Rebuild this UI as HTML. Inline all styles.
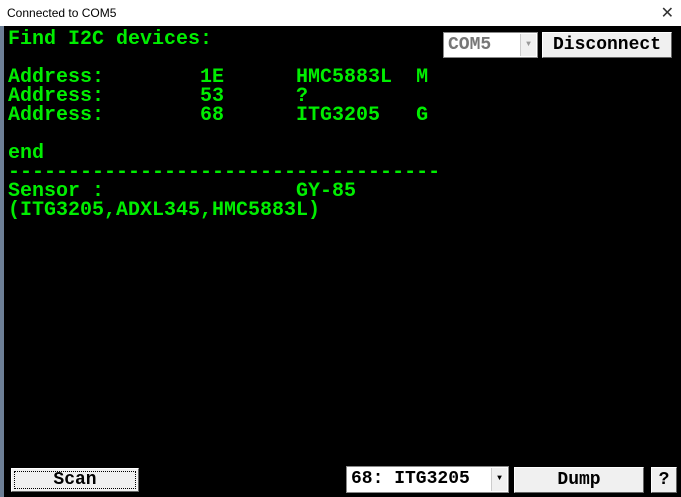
<!DOCTYPE html>
<html><head><style>
body{margin:0;width:681px;height:497px;overflow:hidden;background:#fff;position:relative;font-family:"Liberation Sans",sans-serif}
#title{position:absolute;left:0;top:0;width:681px;height:26px;background:#fff;font-size:12px;color:#000}
#title span{position:absolute;left:7px;top:6px}
#x{position:absolute;right:7px;top:3px;font-size:16px;color:#333;font-weight:300}
#left{position:absolute;left:0;top:26px;width:4px;height:471px;background:#6d7f96}
#term{position:absolute;left:4px;top:26px;width:677px;height:471px;background:#000}
pre{position:absolute;left:8px;top:30px;margin:0;font:bold 20px/19px "Liberation Mono",monospace;color:#00ee00}
.btn{position:absolute;background:#f0f0f0;border:1px solid #fff;border-right-color:#666;border-bottom-color:#666;box-sizing:border-box;font:bold 18px "Liberation Mono",monospace;text-align:center;color:#000}
.cb{position:absolute;background:#fff;border:1px solid #888;box-sizing:border-box;font:bold 18px "Liberation Mono",monospace}
.arr{position:absolute;right:1px;top:1px;bottom:1px;width:15px;background:#f0f0f0;border-left:1px solid #ccc;font-size:8px;text-align:center;line-height:22px}
</style></head><body>
<div id="title"><span>Connected to COM5</span><div id="x">✕</div></div>
<div id="left"></div>
<div id="term"></div>
<pre>Find I2C devices:

Address:        1E      HMC5883L  M
Address:        53      ?
Address:        68      ITG3205   G

end
------------------------------------
Sensor :                GY-85
(ITG3205,ADXL345,HMC5883L)</pre>
<div class="cb" style="left:443px;top:32px;width:95px;height:26px;color:#777;line-height:24px;padding-left:4px">COM5<div class="arr" style="color:#999">▼</div></div>
<div class="btn" style="left:542px;top:32px;width:130px;height:26px;line-height:24px">Disconnect</div>
<div class="btn" style="left:11px;top:468px;width:128px;height:24px;line-height:22px;outline:1px dotted #000;outline-offset:-4px">Scan</div>
<div class="cb" style="left:346px;top:466px;width:163px;height:27px;line-height:25px;padding-left:4px">68: ITG3205<div class="arr">▼</div></div>
<div class="btn" style="left:514px;top:467px;width:130px;height:26px;line-height:24px">Dump</div>
<div class="btn" style="left:651px;top:467px;width:26px;height:26px;line-height:24px">?</div>
</body></html>
